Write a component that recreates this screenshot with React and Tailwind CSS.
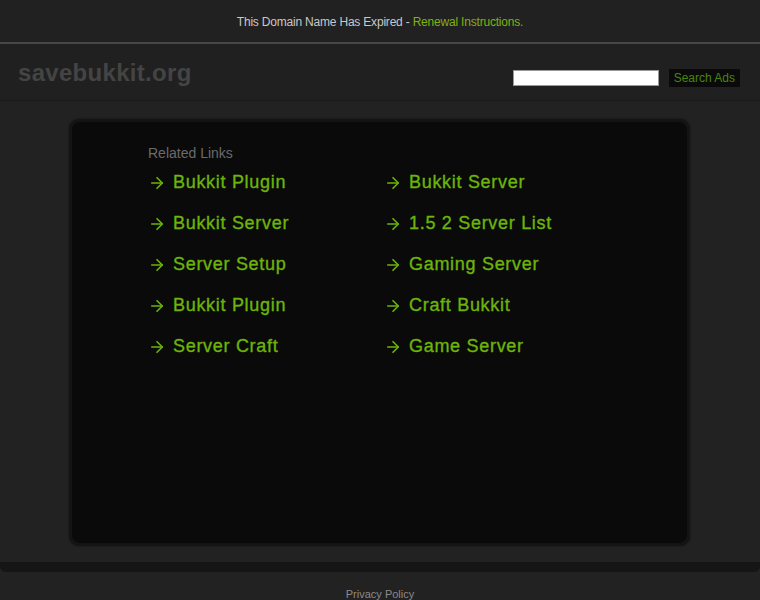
import React from 'react';
import { ArrowRight } from 'lucide-react';

const leftLinks = ['Bukkit Plugin', 'Bukkit Server', 'Server Setup', 'Bukkit Plugin', 'Server Craft'];
const rightLinks = ['Bukkit Server', '1.5 2 Server List', 'Gaming Server', 'Craft Bukkit', 'Game Server'];

const LinkItem = ({ label }) => (
    <a href="#" className="flex items-center h-[41px] text-[18px] tracking-[0.7px] text-[#6cb40a] no-underline [-webkit-text-stroke:0.35px_#6cb40a]">
        <span className="w-[25px]">
            <ArrowRight size={18} strokeWidth={2.2} className="-ml-[0.5px]" />
        </span>
        <span>{label}</span>
    </a>
);

const App = () => {
    return (
        <div className="w-[760px] h-[600px] overflow-hidden bg-[#222222] font-['Liberation_Sans',Arial,sans-serif]">
            {/* expired banner */}
            <div className="h-[42px] bg-[#212121] flex items-center justify-center pt-[1px] text-[12px] tracking-[-0.2px] text-[#c8c8c8]">
                This Domain Name Has Expired -&nbsp;
                <a href="#" className="text-[#7fb20f]">Renewal Instructions.</a>
            </div>
            <div className="h-[2px] bg-[#474747]" />

            {/* header */}
            <div className="h-[57px] bg-[#202020] border-b border-[#1a1a1a] flex items-center justify-between pl-[18px] pr-[20px]">
                <div className="text-[24px] tracking-[0.3px] font-bold text-[#444444] mt-[2px]">savebukkit.org</div>
                <div className="flex items-center gap-[10px] mt-[12px]">
                    <input type="text" className="w-[146px] h-[16px] bg-white border border-[#999] outline-none" />
                    <button className="h-[18px] px-[5px] bg-[#0a0a0a] text-[12px] text-[#4a8510] leading-none">Search Ads</button>
                </div>
            </div>

            {/* body */}
            <div className="bg-[#222222] pt-[18px] pb-[16px] pl-[69px]">
                <div className="w-[621px] h-[427px] rounded-[10px] bg-[#141414] p-[3px] shadow-[0_0_2px_#111]">
                    <div className="w-full h-full rounded-[8px] bg-[#0a0a0a] pl-[76px] pt-[21px]">
                        <div className="text-[14px] text-[#6a6a6a] mb-[-2px]">Related Links</div>
                        <div className="flex">
                            <div className="w-[236px] flex flex-col">
                                {leftLinks.map((l, i) => <LinkItem key={i} label={l} />)}
                            </div>
                            <div className="flex flex-col">
                                {rightLinks.map((l, i) => <LinkItem key={i} label={l} />)}
                            </div>
                        </div>
                    </div>
                </div>
            </div>
            <div className="h-[10px] bg-[#151515] rounded-b-[6px]" />

            {/* footer */}
            <div className="pt-[16px] text-center text-[11px] leading-[12px] text-[#8a8a8a]">Privacy Policy</div>
        </div>
    );
};

export default App;
